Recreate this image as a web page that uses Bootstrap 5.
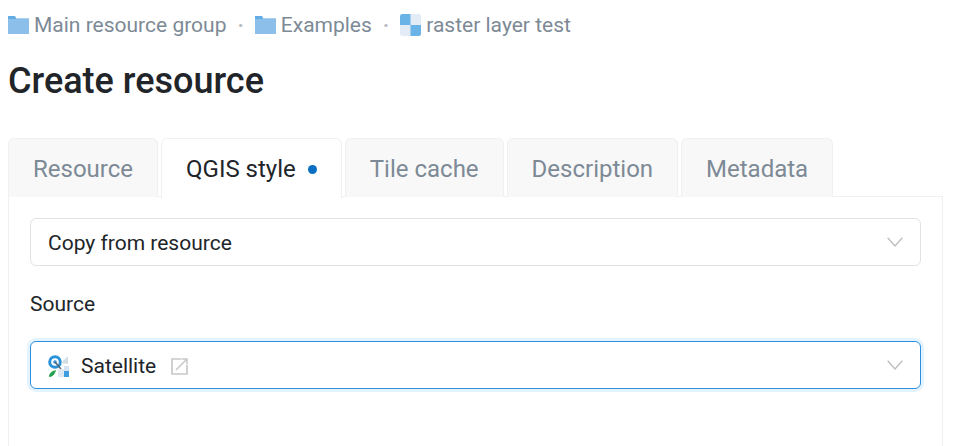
<!DOCTYPE html>
<html lang="en"><head><meta charset="utf-8"><title>Create resource</title>
<link href="https://cdn.jsdelivr.net/npm/bootstrap@5.3.0/dist/css/bootstrap.min.css" rel="stylesheet">
<style>
html,body{height:100%;overflow:hidden}
body{font-family:Roboto,"Liberation Sans",sans-serif;font-size:21px;color:#212529;background:#fff}
.page-wrap{padding:0 15px 0 8px}
.crumbs{height:50px;margin:0;padding:0;align-items:center;font-size:21px;flex-wrap:nowrap}
.crumbs .breadcrumb-item{display:flex;align-items:center;padding:0;color:#7d8a96;line-height:24px}
.crumbs .breadcrumb-item + .breadcrumb-item{padding-left:0}
.crumbs .breadcrumb-item + .breadcrumb-item::before{content:"·";float:none;padding:0 11px;color:#b5bbc0;font-weight:700}
.crumbs svg{margin-right:5px;flex:none}
.page-title{font-size:36px;font-weight:500;line-height:40px;margin:11px 0 37px;color:#212529}
.tabs-bar{border:0;gap:3px;height:59px;position:relative;z-index:1;margin-bottom:-1px}
.tabs-bar .nav-link{height:59px;padding:2px 24px 0;display:flex;align-items:center;font-size:24px;color:#7d8a96;background:#f8f8f8;border:1px solid #f0f0f0;border-bottom:0;border-radius:6px 6px 0 0;margin:0}
.tabs-bar .nav-link.active{color:#212529;background:#fff;height:60px;border-color:#f0f0f0;padding-top:1px}
.tab-dot{width:9px;height:9px;border-radius:50%;background:#0a6fc2;margin-left:12px}
.tab-panel{border:1px solid #f0f0f0;border-bottom:0;padding:21px 21px 60px;height:260px}
.pick{height:48px;display:flex;align-items:center;justify-content:space-between;border:1px solid #e3e3e3;border-radius:6px;padding:2px 17px 0;line-height:1;background:#fff}
.pick.focus{border-color:#2e8fdc;box-shadow:0 0 0 3px #e3f3ff}
.pick-label{line-height:24px;margin:26px 0 25px}
.pick-val{display:flex;align-items:center}
.sat-icon{margin-right:11px;flex:none}
.ext-icon{margin-left:15px;flex:none}
.chev{margin-top:-2px;flex:none}
.tab-panel .form-wrap{width:891px}
</style></head>
<body>
<div class="page-wrap">
<ol class="breadcrumb crumbs">
<li class="breadcrumb-item"><svg width="21" height="18" viewBox="0 0 21 18"><path d="M0 3h8V2h13v16H0z" fill="#8cbfe9"/><path d="M0 0h7l1.500 3H0z" fill="#63ace4"/><path d="M8 2h13v1H8z" fill="#a9d0ef"/></svg>Main resource group</li>
<li class="breadcrumb-item"><svg width="21" height="18" viewBox="0 0 21 18"><path d="M0 3h8V2h13v16H0z" fill="#8cbfe9"/><path d="M0 0h7l1.500 3H0z" fill="#63ace4"/><path d="M8 2h13v1H8z" fill="#a9d0ef"/></svg>Examples</li>
<li class="breadcrumb-item"><svg width="21" height="22" viewBox="0 0 21 22"><rect width="21" height="22" rx="2.500" fill="#e3ebf6"/><path d="M2.500 0H10.500V11H0V2.500A2.500 2.500 0 0 1 2.500 0zM10.500 11H21V19.500A2.500 2.500 0 0 1 18.500 22H10.500z" fill="#69b3e7"/></svg>raster layer test</li>
</ol>
<h1 class="page-title">Create resource</h1>
<ul class="nav nav-tabs tabs-bar">
<li class="nav-item"><a class="nav-link" href="#">Resource</a></li>
<li class="nav-item"><a class="nav-link active" href="#">QGIS style<span class="tab-dot"></span></a></li>
<li class="nav-item"><a class="nav-link" href="#">Tile cache</a></li>
<li class="nav-item"><a class="nav-link" href="#">Description</a></li>
<li class="nav-item"><a class="nav-link" href="#">Metadata</a></li>
</ul>
<div class="tab-panel">
<div class="form-wrap">
<div class="pick"><span>Copy from resource</span><svg class="chev" width="16" height="10" viewBox="0 0 16 10"><path d="M.7.7 8 9 15.300.7" fill="none" stroke="#bdbdbd" stroke-width="1.300"/></svg></div>
<div class="pick-label">Source</div>
<div class="pick focus"><span class="pick-val">
<svg class="sat-icon" width="22" height="22" viewBox="0 0 22 22"><circle cx="7" cy="7" r="5.300" fill="none" stroke="#2a92d8" stroke-width="3"/><circle cx="7" cy="7" r="1.800" fill="#2a92d8"/><path d="M7 7l6 7" stroke="#5a6670" stroke-width="1.500"/><path d="M13 8l7-7v8z" fill="#d3dde6"/><path d="M10 14h6v8h-6z" fill="#dfe8f1"/><path d="M16 11h5v5h-5z" fill="#d3e3f1"/><path d="M16 16h5v6h-5z" fill="#3e9de0"/><path d="M1 22c0-4 3-6 7-7-1 4-3 7-7 7z" fill="#25a050"/></svg>
Satellite
<svg class="ext-icon" width="17" height="17" viewBox="0 0 17 17"><path d="M10 1H1v15h15V7" fill="none" stroke="#c8c8c8" stroke-width="1.700"/><path d="M5 12 15.500 1.500M10.500 1H16v5.500" fill="none" stroke="#c8c8c8" stroke-width="1.500"/></svg>
</span><svg class="chev" width="16" height="10" viewBox="0 0 16 10"><path d="M.7.7 8 9 15.300.7" fill="none" stroke="#bdbdbd" stroke-width="1.300"/></svg></div>
</div>
</div>
</div>
<script src="https://cdn.jsdelivr.net/npm/bootstrap@5.3.0/dist/js/bootstrap.bundle.min.js"></script>
</body></html>
